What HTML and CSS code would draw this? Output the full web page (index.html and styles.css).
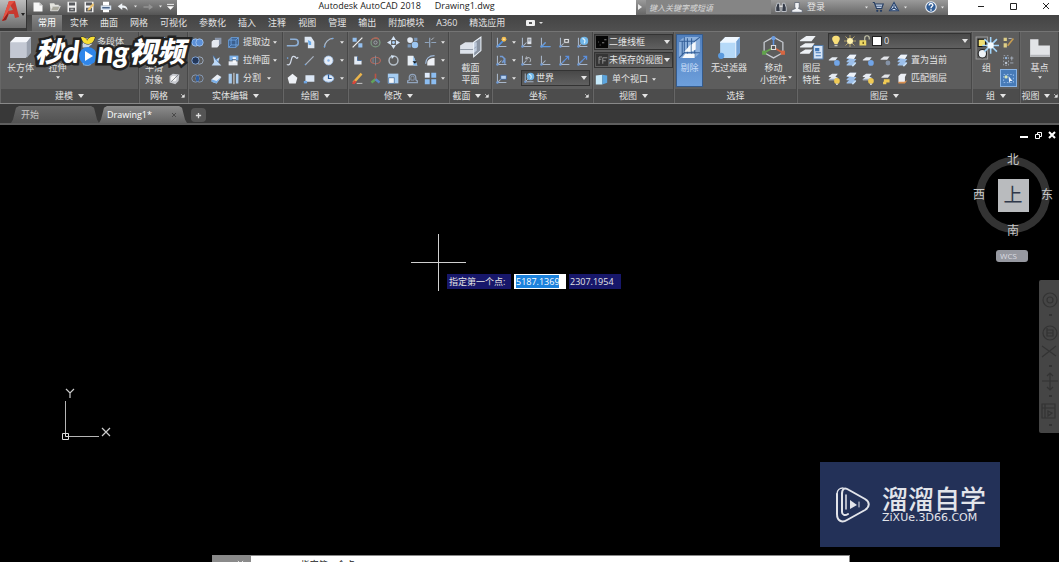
FILE: index.html
```html
<!DOCTYPE html>
<html lang="zh-CN">
<head>
<meta charset="utf-8">
<title>Autodesk AutoCAD 2018 Drawing1.dwg</title>
<link rel="stylesheet" href="styles.css">
</head>
<body>
<svg class="sprite" aria-hidden="true">
  <symbol id="caret" viewBox="0 0 6 4"><path d="M0 0h6L3 4z" fill="currentColor"/></symbol>
  <symbol id="launch" viewBox="0 0 6 6"><path d="M0 0l4 4M5 1v4H1z" stroke="currentColor" fill="currentColor"/></symbol>
  <symbol id="box" viewBox="0 0 24 24"><path d="M2 7l5-5h15v15l-5 5H2z" fill="#c3c8d3"/><path d="M2 7l5-5h15l-4 5z" fill="#f4f6fa"/><path d="M18 7l4-5v15l-4 5z" fill="#9ba2af"/></symbol>
  <symbol id="extrude" viewBox="0 0 24 24"><path d="M3 20l6-5h12l-5 6z" fill="#78b2ed"/><path d="M6 6l4-3h9v12l-4 3H6z" fill="#d7dde8"/></symbol>
  <symbol id="poly" viewBox="0 0 16 16"><path d="M2 10l3-7h8v7l-4 4H2z" fill="#c9d5e4"/></symbol>
  <symbol id="cone" viewBox="0 0 16 16"><path d="M7 3l6 9c-2 3-9 3-11 0z" fill="#dfe8f4"/><path d="M2 12h7l3 2H3z" fill="#68a4e0"/></symbol>
  <symbol id="mesh" viewBox="0 0 16 16"><path d="M2 5l4-3 8 1-1 8-4 4-7-2z" fill="#c7cad0"/><circle cx="7" cy="8" r="3.500" fill="#f5f5f5"/><path d="M4 12l9-9" stroke="#73777e"/></symbol>
  <symbol id="meshred" viewBox="0 0 16 16"><path d="M2 6l5-3 6 2-1 7-5 2-5-3z" fill="#b8bcc5"/><path d="M9 8l5 2-4 4z" fill="#d9543d"/></symbol>
  <symbol id="union" viewBox="0 0 16 16"><circle cx="5.500" cy="8" r="4.500" fill="#5b8fd6" stroke="#a9c9f2"/><circle cx="10.500" cy="8" r="4.500" fill="#5b8fd6" stroke="#a9c9f2"/></symbol>
  <symbol id="subtract" viewBox="0 0 16 16"><circle cx="10.500" cy="8" r="4.500" fill="none" stroke="#a7b7ce"/><circle cx="5.500" cy="8" r="4.500" fill="#24385a" stroke="#8fb5ea"/></symbol>
  <symbol id="intersect" viewBox="0 0 16 16"><circle cx="5.500" cy="8" r="4.500" fill="none" stroke="#8ea5c6"/><circle cx="10.500" cy="8" r="4.500" fill="none" stroke="#8ea5c6"/><ellipse cx="8" cy="8" rx="2" ry="3.600" fill="#2d5ea3"/></symbol>
  <symbol id="interf" viewBox="0 0 16 16"><path d="M6 2h8v7l-2 2H6z" fill="#8a96aa"/><path d="M2 7l2-2h7v7l-2 2H2z" fill="#e4e8ef"/></symbol>
  <symbol id="slice" viewBox="0 0 16 16"><path d="M4 2l3 5 5-3-2 6 4 4H2l3-4z" fill="#bcd7f5"/><path d="M4 2l6 8" stroke="#3f7cc5"/></symbol>
  <symbol id="thick" viewBox="0 0 16 16"><path d="M2 9l7-6 5 3-6 8-6-2z" fill="#e9edf4"/><path d="M2 9l6 2 6-5-6 8-6-2z" fill="#79aee7"/></symbol>
  <symbol id="edges" viewBox="0 0 16 16"><path d="M2 5h9v9H2zM5 2h9v9H5zM2 5l3-3M11 5l3-3M11 14l3-3M2 14l3-3" fill="#3c5f8c" stroke="#6fa8ea"/></symbol>
  <symbol id="face" viewBox="0 0 16 16"><path d="M3 2h11v6H3z" fill="#7cb0e8"/><path d="M2 9h11v5H2z" fill="#e6ebf3"/><path d="M7 4h4v7H7z" fill="#f7f9fc"/><path d="M6 7h5" stroke="#24456f"/></symbol>
  <symbol id="split" viewBox="0 0 16 16"><path d="M2 2h4v12H2zM11 2h3v12h-3z" fill="#a5caee"/><path d="M8.500 1v14" stroke="#fff"/></symbol>
  <symbol id="pline" viewBox="0 0 16 16"><path d="M5 4h6a4 4 0 0 1 0 8H1" fill="none" stroke="#8eb0d7" stroke-width="2"/></symbol>
  <symbol id="polysolid" viewBox="0 0 16 16"><path d="M2 1h8l4 6v8H6V8H2z" fill="#dce6f2"/><path d="M6 5l4 2v4H7z" fill="#66a9eb"/></symbol>
  <symbol id="arc" viewBox="0 0 16 16"><path d="M3 14C3 8 8 3 14 3" fill="none" stroke="#aebdcf" stroke-width="1.500"/><circle cx="3" cy="13" r="1" fill="#6fa8ea"/><circle cx="13" cy="3" r="1" fill="#6fa8ea"/></symbol>
  <symbol id="spline" viewBox="0 0 16 16"><path d="M1 13c7 3 4-12 9-10 3 1 2 4 5 1" fill="none" stroke="#d3dbe8" stroke-width="1.500"/><circle cx="2" cy="5" r="1" fill="#76a7df"/></symbol>
  <symbol id="line" viewBox="0 0 16 16"><path d="M3 13L13 3" stroke="#aab4c2" stroke-width="1.500"/><circle cx="3" cy="13" r="1" fill="#76a7df"/></symbol>
  <symbol id="circle" viewBox="0 0 16 16"><circle cx="8" cy="8" r="5.500" fill="#e6edf7" stroke="#a5c5ed"/><circle cx="8" cy="8" r="1.500" fill="#89b7ee"/></symbol>
  <symbol id="pentagon" viewBox="0 0 16 16"><path d="M8 2l6 5-2 7H4L2 7z" fill="#eef1f6"/></symbol>
  <symbol id="rect" viewBox="0 0 16 16"><path d="M3 4h11v8H3z" fill="#dbe7f6"/><path d="M1 11h4v3H1z" fill="#6ea5e2"/></symbol>
  <symbol id="ellipse" viewBox="0 0 16 16"><ellipse cx="8" cy="8" rx="6.500" ry="4.500" fill="#dce7f5" stroke="#8eb5e5"/><path d="M8 3v5h4" fill="none" stroke="#24599b" stroke-width="1.500"/></symbol>
  <symbol id="mirror3" viewBox="0 0 16 16"><path d="M2 2h5v5H2zM9 9h5v5H9z" fill="#94c0ef"/><path d="M2 14L14 2" stroke="#f1f1f1" stroke-width="1.500"/></symbol>
  <symbol id="gizmo" viewBox="0 0 16 16"><circle cx="8" cy="8" r="5.500" fill="none" stroke="#7b9a80" stroke-width="1.500"/><path d="M3 5a6 6 0 0 1 9-1" fill="none" stroke="#b95b50" stroke-width="1.500"/><circle cx="8" cy="8" r="2" fill="none" stroke="#a7adb7"/></symbol>
  <symbol id="move" viewBox="0 0 16 16"><path d="M8 0l3 5H5zM8 16l3-5H5zM0 8l5-3v6zM16 8l-5-3v6z" fill="#d7e6f8"/><circle cx="8" cy="8" r="1.800" fill="#a8cef7"/></symbol>
  <symbol id="copy" viewBox="0 0 16 16"><circle cx="5" cy="5" r="3.500" fill="#e3eaf4"/><circle cx="11" cy="11" r="4" fill="#9cc6f1"/><path d="M10 2h4v4h-4zM2 10h4v4H2z" fill="#7895b7"/></symbol>
  <symbol id="trim" viewBox="0 0 16 16"><path d="M1 8h5M9 8h6M7 2v12" stroke="#8fa4bd" stroke-width="1.500"/><path d="M9 5l3-3" stroke="#c9d3e0"/></symbol>
  <symbol id="stretch" viewBox="0 0 16 16"><path d="M4 3h4v5h5v5H4z" fill="#e3ebf5"/><path d="M8 3v5h5" fill="none" stroke="#3d689e"/></symbol>
  <symbol id="rotate3" viewBox="0 0 16 16"><ellipse cx="8" cy="8" rx="6" ry="4" fill="none" stroke="#b2675b" stroke-width="1.500"/><path d="M8 2v12M5 5v6" stroke="#8292a4"/></symbol>
  <symbol id="rotate" viewBox="0 0 16 16"><circle cx="8" cy="8" r="5.500" fill="none" stroke="#b6c0ca" stroke-width="1.800"/><path d="M5 1l4 2-3 3z" fill="#d2e3f4"/></symbol>
  <symbol id="mirror" viewBox="0 0 16 16"><path d="M2 2h7l5 12H2z" fill="#e7edf3"/><path d="M9 2l5 12H9z" fill="#80b8ee"/><path d="M8 9h5l-2 3z" fill="#111"/></symbol>
  <symbol id="fillet" viewBox="0 0 16 16"><path d="M4 14v-3c0-4 4-6 9-6v9z" fill="#edf0f5"/><path d="M2 12C2 6 6 2 13 2" fill="none" stroke="#9fb8d8" stroke-width="1.500"/></symbol>
  <symbol id="erase" viewBox="0 0 16 16"><path d="M3 13L13 2" stroke="#ebb54c" stroke-width="3"/><path d="M1 14l3-4 3 2-3 3z" fill="#d9453c"/><path d="M7 14h7" stroke="#ddd"/></symbol>
  <symbol id="scale3" viewBox="0 0 16 16"><path d="M8 2v8" stroke="#ba5446" stroke-width="2"/><path d="M8 9l-5 4" stroke="#63a45a" stroke-width="3"/><path d="M8 9l5 4" stroke="#5a87c9" stroke-width="3"/></symbol>
  <symbol id="scale" viewBox="0 0 16 16"><path d="M1 2h13v12H1z" fill="#a6cdf2"/><path d="M2 7h7v7H2z" fill="#f3f6f9" stroke="#4c77a9"/></symbol>
  <symbol id="offset" viewBox="0 0 16 16"><path d="M2 13v-2c3 0 2-2 2-4a4 4 0 0 1 8 0c0 2 0 4 2 4v2z" fill="none" stroke="#91a4bd" stroke-width="1.500"/><path d="M6 10V7a2 2 0 0 1 4 0v3z" fill="none" stroke="#91a4bd"/></symbol>
  <symbol id="array" viewBox="0 0 16 16"><path d="M1 1h6v6H1z" fill="#dfebfb"/><path d="M9 1h6v6H9zM1 9h6v6H1zM9 9h6v6H9z" fill="#8cbdf1"/></symbol>
  <symbol id="section" viewBox="0 0 24 24"><path d="M2 10l5-3h11v8l-4 3H2z" fill="#dde2ea"/><path d="M2 14h12l4-3" fill="none" stroke="#949da9"/><path d="M15 7l7-5v13l-7 6z" fill="#a9b9d0" fill-opacity=".6" stroke="#edf3fa"/></symbol>
  <symbol id="ucs" viewBox="0 0 16 16"><path d="M3 2v11h11M3 13l5-5" fill="none" stroke="#a8b6c9" stroke-width="1.300"/><circle cx="3" cy="13" r="1.500" fill="#6d99d5"/></symbol>
  <symbol id="ucsnew" viewBox="0 0 16 16"><use href="#ucs"/><path d="M4 12l6-6" stroke="#4c91e5" stroke-width="2"/><circle cx="11" cy="4" r="3" fill="#f4bd50"/><circle cx="11" cy="4" r="1" fill="#fff5c9"/></symbol>
  <symbol id="ucsrot" viewBox="0 0 16 16"><use href="#ucs"/><path d="M6 3h3l3 3-3 5M12 6v6" fill="none" stroke="#739bd3" stroke-width="2"/></symbol>
  <symbol id="ucsdoc" viewBox="0 0 16 16"><use href="#ucs"/><path d="M9 2h5v8H9z" fill="#dde1e8"/><path d="M10 4h3M10 6h3" stroke="#687383"/></symbol>
  <symbol id="ucsblue" viewBox="0 0 16 16"><use href="#ucs"/><path d="M3 13h11M3 13l5-5" fill="none" stroke="#5f9be2" stroke-width="1.500"/></symbol>
  <symbol id="ucsobj" viewBox="0 0 16 16"><use href="#ucs"/><path d="M7 3h7v6H7z" fill="#e1e3e6" stroke="#555"/><path d="M9 5h3v2H9z" fill="#444"/></symbol>
  <symbol id="ucsprev" viewBox="0 0 16 16"><use href="#ucs"/><path d="M7 6c4-4 8 0 5 4M7 6l1-3M7 6h3" fill="none" stroke="#c6ccd5"/></symbol>
  <symbol id="ucsz" viewBox="0 0 16 16"><use href="#ucs"/><path d="M5 11l8-8M9 3h4v4" fill="none" stroke="#5b8fdd" stroke-width="1.500"/></symbol>
  <symbol id="ucsworld" viewBox="0 0 16 16"><use href="#ucs"/><circle cx="10" cy="6" r="5" fill="#71b6e8"/><path d="M8 3c3 1 4 3 2 6" fill="none" stroke="#e1f5fb" stroke-width="1.500"/></symbol>
  <symbol id="ucsview" viewBox="0 0 16 16"><use href="#ucs"/><path d="M7 4h7v5H7z" fill="#b4d0f2" stroke="#375d93"/></symbol>
  <symbol id="wire" viewBox="0 0 16 16"><path d="M0 0h16v16H0z" fill="#050505"/><path d="M3 8h1M8 9h3M11 5h3M5 12h1" stroke="#aaa"/></symbol>
  <symbol id="savedview" viewBox="0 0 16 16"><path d="M0 0h16v16H0z" fill="#353535"/><path d="M4 13V4h4M4 7h3M9 13V5h6M9 9h4" fill="none" stroke="#aaa"/></symbol>
  <symbol id="viewport" viewBox="0 0 16 16"><path d="M1 3l8-1v12H1z" fill="#c6eafb"/><path d="M9 2l6 1v9l-6 2z" fill="#5ba5de"/></symbol>
  <symbol id="cull" viewBox="0 0 24 24"><path d="M2 6l5-4h15v15l-5 5H2z" fill="#8db1dd"/><path d="M2 6h15v16M17 6l5-4M7 2v15L2 22M7 17h15M5 6v14M10 3v17M14 3v17" fill="none" stroke="#345f98"/><path d="M7 16l6-7v7zM14 9l4-3v8l-4 2zM8 18h9v4H5z" fill="#f6f9fc"/></symbol>
  <symbol id="filter" viewBox="0 0 24 24"><path d="M3 7l5-5h14v15l-5 5H3z" fill="#b5d9f8"/><path d="M3 7l5-5h14l-4 5z" fill="#eff7ff"/><path d="M18 7l4-5v15l-4 5z" fill="#77a3d4"/><path d="M3 7h15v15" fill="none" stroke="#e7f3ff"/><circle cx="4" cy="20" r="3" fill="#5a9ade"/></symbol>
  <symbol id="gizmobig" viewBox="0 0 24 24"><path d="M12 2l9 5v10l-9 5-9-5V7z" fill="none" stroke="#c9cdd4" stroke-width="1.200"/><path d="M12 12V2" stroke="#5c91dd" stroke-width="1.500"/><path d="M12 12l-9 5" stroke="#66a650" stroke-width="1.500"/><path d="M12 12l9 5" stroke="#d06442" stroke-width="1.500"/><path d="M10 10h4v4h-4z" fill="#555" stroke="#ddd"/><circle cx="12" cy="3" r="2" fill="#6a9bdf"/><path d="M1 15h4v4H1z" fill="#62a34d"/><path d="M19 15h4v4h-4z" fill="#d76641"/></symbol>
  <symbol id="layers" viewBox="0 0 24 24"><path d="M1 5l6-4h9l-4 5H1zM1 11l5-3h9l-3 4H1zM1 17l5-3h7l-3 4H1z" fill="#eef1f5"/><path d="M14 10h9v13h-9z" fill="#d8e6f8" stroke="#557faf"/><path d="M16 13h3v2h-3zM16 17h5M16 20h5" stroke="#4077b7" fill="#4077b7"/></symbol>
  <symbol id="bulb" viewBox="0 0 16 16"><path d="M5 10C0 3 5 1 8 1s8 2 3 9l-1 2H6z" fill="#f9df79"/><path d="M6 13h4v2H6z" fill="#c4c4bc"/></symbol>
  <symbol id="sun" viewBox="0 0 16 16"><path d="M8 0v16M0 8h16M2 2l12 12M14 2L2 14" stroke="#d4bd70"/><circle cx="8" cy="8" r="4" fill="#fff2ad"/></symbol>
  <symbol id="lock" viewBox="0 0 16 16"><path d="M9 8V4a3 3 0 0 1 6 0v2" fill="none" stroke="#c9c9ae" stroke-width="1.500"/><path d="M2 7h9v7H2z" fill="#ecd765"/><path d="M6 9h2v3H6z" fill="#756522"/></symbol>
  <symbol id="layer" viewBox="0 0 16 16"><path d="M1 5l4-3h7l-3 4H1zM1 9l3-3h8l-3 4H1z" fill="#e5eaf1"/><path d="M1 9h8l3-3" fill="none" stroke="#788aa4"/></symbol>
  <symbol id="layblue" viewBox="0 0 16 16"><path d="M1 7l4-3h7l-3 4H1z" fill="#e5eaf1"/><circle cx="11" cy="11" r="3.500" fill="#71a5e8"/></symbol>
  <symbol id="laystack" viewBox="0 0 16 16"><path d="M2 5l4-4h8l-3 5H2zM2 9l3-3h9l-3 4H2zM2 13l3-3h9l-3 4H2z" fill="#9cbfea"/><path d="M2 5l4-4h8l-3 5z" fill="#edf2f8"/><path d="M9 15l4-4" stroke="#c6def5" stroke-width="2"/></symbol>
  <symbol id="laygold" viewBox="0 0 16 16"><use href="#layer"/><circle cx="11" cy="11" r="3.500" fill="#f0ca54"/><path d="M10 14h2v2h-2z" fill="#ddd"/></symbol>
  <symbol id="layunlock" viewBox="0 0 16 16"><path d="M3 6l4-3h7l-3 4H3z" fill="#e3e5ea"/><path d="M6 9h7v4H9v2H5v-3h1z" fill="#f0ca54"/></symbol>
  <symbol id="laygray" viewBox="0 0 16 16"><path d="M2 6l4-3h7l-3 4H2z" fill="#e3e5ea"/><circle cx="11" cy="11" r="3" fill="#8492a6"/></symbol>
  <symbol id="laymatch" viewBox="0 0 16 16"><path d="M3 5l3-3h7l-2 4v7H3z" fill="#eceff4"/><path d="M3 12h7l4-2-3 4H3z" fill="#d98f4f"/></symbol>
  <symbol id="group" viewBox="0 0 24 24"><path d="M2 2h11v21H2z" fill="none" stroke="#999"/><path d="M4 4h7v7H4z" fill="#f0df72" stroke="#111"/><circle cx="8" cy="18" r="4" fill="#eef3f7" stroke="#222"/><path d="M16 2v16M8 10h16M10 4l12 12M22 4L10 16" stroke="#a3d5fa" stroke-width="1.500"/><circle cx="16" cy="10" r="3" fill="#f3fbff"/></symbol>
  <symbol id="groupedit" viewBox="0 0 16 16"><path d="M2 2h4v4H2zM2 9h4v5H2z" fill="#dfcf87"/><path d="M7 12l7-9" stroke="#c49b51" stroke-width="2"/><path d="M8 3h4" stroke="#ccc"/></symbol>
  <symbol id="ungroup" viewBox="0 0 16 16"><path d="M2 2h6v12H2z" fill="none" stroke="#a6adb8" stroke-dasharray="2"/><circle cx="5" cy="5" r="1.500" fill="#8fb1d8"/><circle cx="5" cy="11" r="1.500" fill="#bbc4d0"/><path d="M12 3v5M10 5h4M10 11h4" stroke="#afbac9"/></symbol>
  <symbol id="groupsel" viewBox="0 0 16 16"><path d="M2 3h12v10H2z" fill="none" stroke="#a4c8f3" stroke-dasharray="2"/><circle cx="5" cy="6" r="2" fill="#d8e6b9"/><path d="M8 5l5 6h-3l-1 3z" fill="#e8f1fc"/></symbol>
  <symbol id="base" viewBox="0 0 24 24"><path d="M3 4h8v6h11v11H3z" fill="#e2e4e7"/><path d="M3 19h19v2H3z" fill="#b4b6ba"/></symbol>
  <symbol id="new" viewBox="0 0 16 16"><path d="M2 2h8l4 4v8H2z" fill="#f8f8f8"/><path d="M10 2v4h4" fill="#b9b9b9"/></symbol>
  <symbol id="open" viewBox="0 0 16 16"><path d="M1 3h6l1 2h5v2H5l-3 6z" fill="#e4e4de"/><path d="M5 7h10l-3 6H2z" fill="#aaa99d" stroke="#eee"/></symbol>
  <symbol id="save" viewBox="0 0 16 16"><path d="M2 1h12v14H2z" fill="#f1f1f1"/><path d="M4 2h8v4H4zM4 9h8v5H4z" fill="#57595d"/><path d="M6 11h4" stroke="#fff"/></symbol>
  <symbol id="saveas" viewBox="0 0 16 16"><use href="#save"/><path d="M7 10l6-7 2 2-6 7-3 1z" fill="#edc36e"/></symbol>
  <symbol id="print" viewBox="0 0 16 16"><path d="M4 1h8v5H4zM4 10h8v5H4z" fill="#fff"/><path d="M1 6h14v6H1z" fill="#d7e2ef"/><path d="M3 9h10" stroke="#4a6588" stroke-width="2"/></symbol>
  <symbol id="undo" viewBox="0 0 16 16"><path d="M1 7l6-4v3c5 0 7 2 7 7-2-4-4-4-7-4v3z" fill="#f0f4f8"/></symbol>
  <symbol id="redo" viewBox="0 0 16 16"><path d="M2 8h10M9 5l4 3-4 3" fill="none" stroke="#949494" stroke-width="2"/></symbol>
  <symbol id="binoc" viewBox="0 0 16 16"><path d="M3 3h3l1 11H1V9zM10 3h3l2 6v5H9z" fill="#353b47" stroke="#d9dde4"/><path d="M6 7h4" stroke="#ddd" stroke-width="2"/></symbol>
  <symbol id="user" viewBox="0 0 16 16"><path d="M5 2h6v6l-1 2 5 2v3H1v-3l5-2-1-2z" fill="#f0f2f5" stroke="#555e6b"/></symbol>
  <symbol id="cart" viewBox="0 0 16 16"><path d="M1 2h2l3 8h7l2-6H4" fill="#c3d2e8" stroke="#243c61" stroke-width="1.500"/><path d="M5 7h8" stroke="#243c61"/><circle cx="7" cy="13" r="1.500" fill="#243c61"/><circle cx="12" cy="13" r="1.500" fill="#243c61"/></symbol>
  <symbol id="apps" viewBox="0 0 16 16"><path d="M8 2L2 13h12z" fill="#d6e3f4" stroke="#28446f" stroke-width="1.500"/><path d="M8 5v4M8 9l-4 3M8 9l4 3" fill="none" stroke="#28446f" stroke-width="1.500"/></symbol>
  <symbol id="help" viewBox="0 0 16 16"><circle cx="8" cy="8" r="7" fill="#315e97" stroke="#f0f3f8" stroke-width="1.500"/><path d="M5.500 6c0-4 5-3 5-0.500C10.500 7 8 7 8 9.500M8 11v2" fill="none" stroke="#fff" stroke-width="1.800"/></symbol>
</svg>

<div class="app">
  <header class="top">
    <button class="appmenu" aria-label="应用程序菜单">
      <svg viewBox="0 0 26 27"><path d="M2 20L9 0h6l4 16-4 1-1-4H9l-3 6z" fill="#c8382e"/><path d="M10 4l-2 6 5-1z" fill="#8f8b89"/><path d="M2 20l5-10 1 4-2 5z" fill="#8e211d"/><path d="M9 0h6l-4 4-4 9-5 7z" fill="#e65244"/><path d="M21 12h4l-2 3z" fill="#222"/></svg>
    </button>
    <div class="toprows">
      <div class="titlebar">
        <div class="quick">
          <button aria-label="新建"><svg class="i"><use href="#new"/></svg></button>
          <button aria-label="打开"><svg class="i"><use href="#open"/></svg></button>
          <button aria-label="保存"><svg class="i"><use href="#save"/></svg></button>
          <button aria-label="另存为"><svg class="i"><use href="#saveas"/></svg></button>
          <button aria-label="打印"><svg class="i"><use href="#print"/></svg></button>
          <button aria-label="放弃"><svg class="i"><use href="#undo"/></svg></button>
          <svg class="c"><use href="#caret"/></svg>
          <button aria-label="重做"><svg class="i"><use href="#redo"/></svg></button>
          <svg class="c"><use href="#caret"/></svg>
          <button class="more" aria-label="自定义"><svg viewBox="0 0 8 8"><path d="M0 1h8" stroke="#fff"/><path d="M0 3h8L4 7z" fill="#fff"/></svg></button>
        </div>
        <h1 class="title"><span>Autodesk AutoCAD 2018</span><span>Drawing1.dwg</span></h1>
        <div class="info">
          <button class="expand" aria-label="展开"><svg viewBox="0 0 4 6"><path d="M0 0l4 3-4 3z" fill="#eee"/></svg></button>
          <input class="search" aria-label="搜索" placeholder="键入关键字或短语">
          <button aria-label="查找"><svg class="i"><use href="#binoc"/></svg></button>
          <button class="login"><svg class="i"><use href="#user"/></svg>登录</button>
          <svg class="c"><use href="#caret"/></svg>
          <button aria-label="商店"><svg class="i"><use href="#cart"/></svg></button>
          <button aria-label="应用"><svg class="i"><use href="#apps"/></svg></button>
          <svg class="c"><use href="#caret"/></svg>
          <button class="help" aria-label="帮助"><svg class="i"><use href="#help"/></svg></button>
          <svg class="c"><use href="#caret"/></svg>
        </div>
        <div class="win">
          <button aria-label="最小化"><svg viewBox="0 0 8 8"><path d="M1 4.500h6" stroke="#222"/></svg></button>
          <button aria-label="最大化"><svg viewBox="0 0 8 8"><path d="M1.500 1.500h6v6h-6z" fill="none" stroke="#222"/></svg></button>
          <button aria-label="关闭"><svg viewBox="0 0 8 8"><path d="M1 1l6 6M7 1L1 7" stroke="#222"/></svg></button>
        </div>
      </div>
      <nav class="tabs">
        <button class="on">常用</button><button>实体</button><button>曲面</button><button>网格</button><button>可视化</button><button>参数化</button><button>插入</button><button>注释</button><button>视图</button><button>管理</button><button>输出</button><button>附加模块</button><button>A360</button><button>精选应用</button>
        <button class="cam" aria-label="录制"><svg viewBox="0 0 18 8"><rect x="1" y="1" width="9" height="6" rx="1" fill="#eee"/><path d="M4 3h3v2H4z" fill="#555"/><path d="M14 3h4l-2 2z" fill="#ddd"/></svg></button>
      </nav>
    </div>
  </header>

  <main class="ribbon">
    <section class="panel">
      <div class="body model">
        <button class="big"><svg class="b"><use href="#box"/></svg><span>长方体</span><svg class="c"><use href="#caret"/></svg></button>
        <button class="big"><svg class="b"><use href="#extrude"/></svg><span>拉伸</span><svg class="c"><use href="#caret"/></svg></button>
        <div class="stack">
          <button class="t"><svg class="i"><use href="#poly"/></svg>多段体</button>
          <button class="t"><svg class="i"><use href="#cone"/></svg>按住</button>
        </div>
      </div>
      <h2>建模<svg class="c"><use href="#caret"/></svg></h2>
    </section>
    <section class="panel">
      <div class="body meshes">
        <button class="big"><svg class="b"><use href="#box"/></svg><span>平滑<br>对象</span></button>
        <div class="stack">
          <button class="t" aria-label="提高平滑度"><svg class="i"><use href="#mesh"/></svg></button>
          <button class="t" aria-label="降低平滑度"><svg class="i"><use href="#meshred"/></svg></button>
          <button class="t" aria-label="优化网格"><svg class="i"><use href="#mesh"/></svg></button>
        </div>
      </div>
      <h2>网格<svg class="l"><use href="#launch"/></svg></h2>
    </section>
    <section class="panel">
      <div class="body grid g-solid">
        <button class="t" aria-label="并集"><svg class="i"><use href="#union"/></svg></button>
        <button class="t" aria-label="干涉"><svg class="i"><use href="#interf"/></svg></button>
        <button class="t lab"><svg class="i"><use href="#edges"/></svg>提取边</button><svg class="c"><use href="#caret"/></svg>
        <button class="t" aria-label="差集"><svg class="i"><use href="#subtract"/></svg></button>
        <button class="t" aria-label="剖切"><svg class="i"><use href="#slice"/></svg></button>
        <button class="t lab"><svg class="i"><use href="#face"/></svg>拉伸面</button><svg class="c"><use href="#caret"/></svg>
        <button class="t" aria-label="交集"><svg class="i"><use href="#intersect"/></svg></button>
        <button class="t" aria-label="加厚"><svg class="i"><use href="#thick"/></svg></button>
        <button class="t lab wide"><svg class="i"><use href="#split"/></svg>分割<svg class="c"><use href="#caret"/></svg></button>
      </div>
      <h2>实体编辑<svg class="c"><use href="#caret"/></svg></h2>
    </section>
    <section class="panel">
      <div class="body grid g-draw">
        <button class="t" aria-label="多段线"><svg class="i"><use href="#pline"/></svg></button><button class="t" aria-label="三维多段线"><svg class="i"><use href="#polysolid"/></svg></button><button class="t" aria-label="圆弧"><svg class="i"><use href="#arc"/></svg></button><svg class="c"><use href="#caret"/></svg>
        <button class="t" aria-label="样条曲线"><svg class="i"><use href="#spline"/></svg></button><button class="t" aria-label="直线"><svg class="i"><use href="#line"/></svg></button><button class="t" aria-label="圆"><svg class="i"><use href="#circle"/></svg></button><svg class="c"><use href="#caret"/></svg>
        <button class="t" aria-label="多边形"><svg class="i"><use href="#pentagon"/></svg></button><button class="t" aria-label="矩形"><svg class="i"><use href="#rect"/></svg></button><button class="t" aria-label="椭圆"><svg class="i"><use href="#ellipse"/></svg></button><svg class="c"><use href="#caret"/></svg>
      </div>
      <h2>绘图<svg class="c"><use href="#caret"/></svg></h2>
    </section>
    <section class="panel">
      <div class="body grid g-modify">
        <button class="t" aria-label="三维镜像"><svg class="i"><use href="#mirror3"/></svg></button><button class="t" aria-label="三维旋转"><svg class="i"><use href="#gizmo"/></svg></button><button class="t" aria-label="移动"><svg class="i"><use href="#move"/></svg></button><button class="t" aria-label="复制"><svg class="i"><use href="#copy"/></svg></button><button class="t" aria-label="修剪"><svg class="i"><use href="#trim"/></svg></button><svg class="c"><use href="#caret"/></svg>
        <button class="t" aria-label="拉伸"><svg class="i"><use href="#stretch"/></svg></button><button class="t" aria-label="三维对齐"><svg class="i"><use href="#rotate3"/></svg></button><button class="t" aria-label="旋转"><svg class="i"><use href="#rotate"/></svg></button><button class="t" aria-label="镜像"><svg class="i"><use href="#mirror"/></svg></button><button class="t" aria-label="圆角"><svg class="i"><use href="#fillet"/></svg></button><svg class="c"><use href="#caret"/></svg>
        <button class="t" aria-label="删除"><svg class="i"><use href="#erase"/></svg></button><button class="t" aria-label="三维缩放"><svg class="i"><use href="#scale3"/></svg></button><button class="t" aria-label="缩放"><svg class="i"><use href="#scale"/></svg></button><button class="t" aria-label="偏移"><svg class="i"><use href="#offset"/></svg></button><button class="t" aria-label="阵列"><svg class="i"><use href="#array"/></svg></button><svg class="c"><use href="#caret"/></svg>
      </div>
      <h2>修改<svg class="c"><use href="#caret"/></svg></h2>
    </section>
    <section class="panel">
      <div class="body center">
        <button class="big"><svg class="b"><use href="#section"/></svg><span>截面<br>平面</span></button>
      </div>
      <h2>截面<svg class="c"><use href="#caret"/></svg><svg class="l"><use href="#launch"/></svg></h2>
    </section>
    <section class="panel">
      <div class="body grid g-coord">
        <button class="t" aria-label="原点"><svg class="i"><use href="#ucsnew"/></svg></button><svg class="c"><use href="#caret"/></svg><button class="t" aria-label="命名 UCS"><svg class="i"><use href="#ucsdoc"/></svg></button><button class="t" aria-label="UCS"><svg class="i"><use href="#ucsblue"/></svg></button><button class="t" aria-label="对象 UCS"><svg class="i"><use href="#ucsobj"/></svg></button><button class="t" aria-label="世界 UCS"><svg class="i"><use href="#ucsworld"/></svg></button>
        <button class="t" aria-label="旋转 X"><svg class="i"><use href="#ucsrot"/></svg></button><svg class="c"><use href="#caret"/></svg><button class="t" aria-label="上一个 UCS"><svg class="i"><use href="#ucsprev"/></svg></button><button class="t" aria-label="原点 UCS"><svg class="i"><use href="#ucs"/></svg></button><button class="t" aria-label="Z 轴"><svg class="i"><use href="#ucsz"/></svg></button><button class="t" aria-label="三点"><svg class="i"><use href="#ucsz"/></svg></button>
        <button class="t" aria-label="视图 UCS"><svg class="i"><use href="#ucsview"/></svg></button><svg class="c"><use href="#caret"/></svg>
        <div class="combo span"><svg class="i"><use href="#ucsworld"/></svg><select aria-label="坐标系"><option>世界</option></select><svg class="c"><use href="#caret"/></svg></div>
      </div>
      <h2>坐标<svg class="l"><use href="#launch"/></svg></h2>
    </section>
    <section class="panel">
      <div class="body views">
        <div class="combo"><svg class="i"><use href="#wire"/></svg><select aria-label="视觉样式"><option>二维线框</option></select><svg class="c"><use href="#caret"/></svg></div>
        <div class="combo"><svg class="i"><use href="#savedview"/></svg><select aria-label="视图"><option>未保存的视图</option></select><svg class="c"><use href="#caret"/></svg></div>
        <button class="t lab"><svg class="i"><use href="#viewport"/></svg>单个视口<svg class="c"><use href="#caret"/></svg></button>
      </div>
      <h2>视图<svg class="c"><use href="#caret"/></svg></h2>
    </section>
    <section class="panel">
      <div class="body select">
        <button class="big on"><svg class="b"><use href="#cull"/></svg><span>剔除</span></button>
        <button class="big"><svg class="b"><use href="#filter"/></svg><span>无过滤器</span><svg class="c"><use href="#caret"/></svg></button>
        <button class="big"><svg class="b"><use href="#gizmobig"/></svg><span>移动<br>小控件</span></button>
        <svg class="c"><use href="#caret"/></svg>
      </div>
      <h2>选择</h2>
    </section>
    <section class="panel">
      <div class="body layer">
        <button class="big"><svg class="b"><use href="#layers"/></svg><span>图层<br>特性</span></button>
        <div class="layertools">
          <div class="combo"><svg class="i"><use href="#bulb"/></svg><svg class="i"><use href="#sun"/></svg><svg class="i"><use href="#lock"/></svg><span class="swatch"></span><select aria-label="图层"><option>0</option></select><svg class="c"><use href="#caret"/></svg></div>
          <div class="row"><button class="t" aria-label="关"><svg class="i"><use href="#layblue"/></svg></button><button class="t" aria-label="隔离"><svg class="i"><use href="#laystack"/></svg></button><button class="t" aria-label="冻结"><svg class="i"><use href="#layblue"/></svg></button><button class="t" aria-label="锁定"><svg class="i"><use href="#laygray"/></svg></button><button class="t lab"><svg class="i"><use href="#laystack"/></svg>置为当前</button></div>
          <div class="row"><button class="t" aria-label="打开所有"><svg class="i"><use href="#laygold"/></svg></button><button class="t" aria-label="取消隔离"><svg class="i"><use href="#laystack"/></svg></button><button class="t" aria-label="解冻"><svg class="i"><use href="#laygold"/></svg></button><button class="t" aria-label="解锁"><svg class="i"><use href="#layunlock"/></svg></button><button class="t lab"><svg class="i"><use href="#laymatch"/></svg>匹配图层</button></div>
        </div>
      </div>
      <h2>图层<svg class="c"><use href="#caret"/></svg></h2>
    </section>
    <section class="panel">
      <div class="body groups">
        <button class="big"><svg class="b"><use href="#group"/></svg><span>组</span></button>
        <div class="stack">
          <button class="t" aria-label="编组编辑"><svg class="i"><use href="#groupedit"/></svg></button>
          <button class="t" aria-label="解除编组"><svg class="i"><use href="#ungroup"/></svg></button>
          <button class="t on" aria-label="组选择"><svg class="i"><use href="#groupsel"/></svg></button>
        </div>
      </div>
      <h2>组<svg class="c"><use href="#caret"/></svg></h2>
    </section>
    <section class="panel">
      <div class="body center">
        <button class="big"><svg class="b"><use href="#base"/></svg><span>基点</span><svg class="c"><use href="#caret"/></svg></button>
      </div>
      <h2>视图<svg class="c"><use href="#caret"/></svg><svg class="l"><use href="#launch"/></svg></h2>
    </section>
    <div class="brand"><span>秒</span><span class="latin">d</span><svg class="play" viewBox="0 0 18 30"><path d="M2 1c4 0 6 2 6 4 1-3 4-5 8-4-1 5-4 7-7 7-4 0-6-3-7-7z" fill="#f7df35" stroke="#222"/><circle cx="9" cy="20" r="9" fill="#2f86ea"/><path d="M6 15l8 5-8 5z" fill="#fff"/></svg><span class="latin">ng</span><span>视频</span></div>
  </main>

  <div class="files">
    <button class="file">开始</button>
    <button class="file on">Drawing1*<svg viewBox="0 0 6 6"><path d="M1 1l4 4M5 1L1 5" stroke="#4a4a4a"/></svg></button>
    <button class="plus" aria-label="新图形"><svg viewBox="0 0 8 8"><path d="M4 1v6M1 4h6" stroke="#ddd" stroke-width="1.500"/></svg></button>
  </div>

  <div class="canvas">
    <div class="docwin">
      <button aria-label="最小化"><svg viewBox="0 0 8 8"><path d="M0 6h8" stroke="#fff" stroke-width="2"/></svg></button>
      <button aria-label="还原"><svg viewBox="0 0 8 8"><path d="M1.500 3.500h4v4h-4zM3.500 3V1.500h4v4H6" fill="none" stroke="#fff"/></svg></button>
      <button aria-label="关闭"><svg viewBox="0 0 8 8"><path d="M1 1l6 6M7 1L1 7" stroke="#fff" stroke-width="2"/></svg></button>
    </div>
    <svg class="cross" viewBox="0 0 55 57"><path d="M27.500 0v57M0 28.500h55" stroke="#d0d0d0"/></svg>
    <div class="dyn">
      <label for="px">指定第一个点:</label>
      <span class="field"><input id="px" value="5187.1369"></span>
      <input class="py" aria-label="Y" value="2307.1954">
    </div>
    <svg class="ucsicon" viewBox="0 0 54 56"><path d="M5.500 14v32M8 49.500h31" stroke="#b5b5b5"/><path d="M2.500 46.500h6v6h-6zM5.500 46v3.500H9" fill="none" stroke="#ddd"/><path d="M6 2l4 4 4-4M10 6v5M42 41l8 8M50 41l-8 8" fill="none" stroke="#ccc" stroke-width="1.200"/></svg>
    <div class="cube">
      <span class="n">北</span><span class="w">西</span><button class="up">上</button><span class="e">东</span><span class="s">南</span>
    </div>
    <button class="wcs">WCS</button>
    <div class="nav">
      <svg viewBox="0 0 20 153" fill="none" stroke="#333" stroke-width="1.200"><circle cx="11" cy="20" r="7"/><circle cx="11" cy="20" r="3"/><circle cx="11" cy="53" r="7"/><path d="M8 48v8h6v-6H8M8 53h6M3 66l14 10M17 66L3 77M11 93v17M3 101h16M8 96l3-3 3 3M8 107l3 3 3-3M3 124h13v14H3zM3 128h13M6 124v14M9 131l4 2-4 3z"/><path d="M10 35h3M10 86h3M10 116h3M10 145h3" stroke-width="2"/></svg>
    </div>
    <div class="mark">
      <svg viewBox="0 0 36 38" fill="none" stroke="#e2e4ea" stroke-linecap="round"><path d="M2 8v20c0 7 5 9 10 6l18-10c5-3 5-8 0-11L14 4C9 1 7 3 7 8v18c0 3 3 4 6 2" stroke-width="2"/><path d="M2 8c0-4 3-6 6-6M11 9v14" stroke-width="1.500"/><path d="M15 14l7 5-7 4z" fill="#e2e4ea" stroke="none"/><path d="M24 16v5"/></svg>
      <div><strong>溜溜自学</strong><span>ZiXUe.3D66.COM</span></div>
    </div>
    <div class="cmd"><span class="grip"><svg viewBox="0 0 8 8"><path d="M1 1l6 6M7 1L1 7" stroke="#eee"/></svg></span><input aria-label="命令行" value="指定第一个点:"></div>
  </div>
</div>
</body>
</html>
```
FILE: styles.css
```css
*, *::before { box-sizing: border-box; }
body { margin: 0; background: #000; color: #e4e4e4; font: 9px/12px "Open Sans", "Noto Sans CJK SC", sans-serif; overflow: hidden; }
button, input, select { margin: 0; padding: 0; border: 0; background: none; color: inherit; font: inherit; appearance: none; }
button { white-space: nowrap; }
svg { display: block; flex: none; }
.sprite { position: absolute; width: 0; height: 0; }
.app { display: flex; flex-direction: column; height: 100vh; }
.i { width: 13px; height: 13px; }
.b { width: 25px; height: 25px; }
.c { width: 4px; height: 3px; }
.l { width: 4px; height: 4px; }

.top { display: flex; height: 31px; background: #4d4d4d; }
.appmenu { width: 27px; background: linear-gradient(#bdbdbd, #6d6d6d); border-right: 1px solid #333; border-bottom: 3px solid #3a3a3a; }
.appmenu svg { width: 26px; height: 27px; }
.toprows { flex: 1; min-width: 0; }
.titlebar { display: flex; height: 15px; background: #fff; }
.quick { display: flex; align-items: center; gap: 5px; width: 150px; padding: 0 0 2px 5px; background: linear-gradient(#888, #555); }
.quick .c { width: 3px; }
.quick .more svg { width: 7px; height: 8px; }
.quick .i, .info .i { width: 12px; height: 12px; }
.title { flex: 1; display: flex; justify-content: center; gap: 14px; margin: 0; color: #222; font-size: 9px; font-weight: 400; line-height: 11px; white-space: nowrap; }
.info { display: flex; align-items: center; width: 312px; gap: 4px; padding: 0 4px 1px 0; background: linear-gradient(#9a9a9a, #666); }
.info .c { width: 3px; }
.expand { width: 6px; padding-left: 2px; }
.expand svg { width: 4px; height: 6px; }
.search { width: 125px; height: 14px; padding-left: 3px; background: #858585; font-style: italic; font-size: 8px; }
.search::placeholder { color: #d8d8d8; opacity: 1; }
.login { display: flex; align-items: center; gap: 4px; flex: 1; }
.help { padding-left: 14px; }
.win { display: flex; align-items: center; width: 111px; padding: 0 0 4px 14px; }
.win button { flex: 1; }
.win svg { width: 8px; height: 8px; margin: 0 auto 0 15px; }
.tabs { display: flex; height: 16px; padding: 0 5px; background: linear-gradient(#444, #505050); }
.tabs button { padding: 0 6px; }
.tabs .on { margin-right: 2px; background: linear-gradient(#858585, #656565); color: #fff; }
.tabs .cam { padding-left: 14px; }
.cam svg { width: 18px; height: 8px; }

.ribbon { position: relative; display: grid; grid-template-columns: 139fr 49fr 95fr 65fr 101fr 43fr 101fr 81fr 123fr 175fr 48fr 39fr; height: 73px; background: #5d5d5d; border-top: 1px solid #747474; border-bottom: 1px solid #888; }
.panel { display: flex; flex-direction: column; min-width: 0; border-right: 1px solid #484848; border-left: 1px solid #666; }
.panel h2 { display: flex; align-items: center; justify-content: center; gap: 5px; height: 14px; margin: 0; background: #4c4c4c; font-size: 9px; font-weight: 400; line-height: 14px; white-space: nowrap; }
.panel h2 .c { width: 6px; height: 4px; }
.panel:nth-child(2) h2 { padding-left: 8px; gap: 13px; }
.panel:nth-child(7) h2 { justify-content: flex-end; gap: 38px; padding-right: 3px; }
.panel:nth-child(6) h2, .panel:nth-child(12) h2 { gap: 4px; }
.body { flex: 1; min-height: 0; padding-top: 1px; display: flex; }
.big { display: flex; flex-direction: column; align-items: center; padding-top: 2px; line-height: 12px; }
.big .b { margin-bottom: 2px; }
.big .c { margin-top: 2px; }
.big.on { height: 53px; margin-top: 1px; background: linear-gradient(#507fbd, #6d9fdc); border: 1px solid #355b8c; padding-top: 0; color: #c9def8; }
.t { display: flex; align-items: center; justify-content: center; height: 18px; gap: 3px; }
.t.on { background: #477bb8; border: 1px solid #8ab3e3; }
.lab { justify-content: flex-start; }
.stack { display: flex; flex-direction: column; }
.grid { display: grid; grid-auto-rows: 18px; align-items: center; align-content: start; }
.grid > .c { justify-self: center; }
.model { padding-left: 6px; gap: 10px; }
.model .big { min-width: 27px; }
.model .stack { align-items: flex-start; }
.meshes { padding-left: 4px; gap: 4px; }
.meshes .big { width: 20px; }
.g-solid { grid-template-columns: 17px 20px 45px 8px; }
.g-solid .lab { padding-left: 1px; }
.g-solid .wide { grid-column: span 2; }
.g-solid .wide .c { margin-left: 3px; }
.g-draw { grid-template-columns: 16px 18px 20px 8px; }
.g-modify { grid-template-columns: 16px 20px 17px 20px 17px 8px; }
.center { justify-content: center; }
.g-coord { grid-template-columns: 17px 7px 19px 19px 18px 18px; }
.combo { display: flex; align-items: center; height: 16px; padding: 0 2px 0 1px; gap: 1px; background: linear-gradient(#484848, #606060); border: 1px solid #333; }
.combo select { flex: 1; min-width: 0; height: 14px; }
.combo option { background: #444; }
.combo .i { width: 12px; height: 12px; }
.combo .c { width: 6px; height: 4px; }
.span { grid-column: span 4; margin: 0 1px 0 4px; }
.views { flex-direction: column; gap: 2px; padding-top: 2px; }
.views .lab { gap: 4px; padding-left: 1px; }
.select { padding-left: 1px; gap: 8px; }
.select .on { width: 27px; }
.select > .big:nth-child(3) { margin-left: 5px; }
.select > .c { width: 4px; margin: 43px 0 0 -7px; }
.layer { padding-left: 1px; gap: 4px; }
.layertools { flex: 1; min-width: 0; }
.layertools .combo { margin-bottom: 2px; gap: 2px; }
.swatch { width: 10px; height: 10px; background: #fff; border: 1px solid #222; }
.row { display: flex; gap: 4px; }
.row .lab { gap: 2px; }
.groups { padding-left: 1px; gap: 1px; }
.groups .t { width: 17px; }

.brand { position: absolute; left: 35px; top: 0; display: flex; align-items: center; height: 38px; color: #fff; font-size: 28px; font-weight: 900; font-style: italic; line-height: 36px; -webkit-text-stroke: 5px #222; paint-order: stroke fill; pointer-events: none; }
.brand .latin { font-family: Lato, sans-serif; font-size: 30px; }
.play { width: 18px; height: 30px; }

.files { display: flex; align-items: flex-end; height: 21px; padding-left: 11px; background: #383838; border-bottom: 2px solid #5e5e5e; }
.file { display: flex; align-items: center; justify-content: space-between; width: 88px; height: 17px; padding: 0 10px; background: linear-gradient(#666, #525252); clip-path: polygon(0 100%, 2px 80%, 5px 10%, 8px 0, 80px 0, 83px 10%, 86px 80%, 88px 100%); color: #c8c8c8; }
.file.on { padding-left: 8px; background: linear-gradient(#8c8c8c, #616161); color: #fff; }
.file svg { width: 6px; height: 6px; }
.plus { width: 15px; height: 14px; margin: 0 0 1px 4px; padding: 0 4px; background: #555; border-radius: 4px; }
.plus svg { width: 7px; height: 7px; }

.canvas { position: relative; flex: 1; min-height: 0; overflow: hidden; background: #000; }
.docwin { position: absolute; top: 6px; right: 3px; display: flex; gap: 6px; }
.docwin svg { width: 8px; height: 8px; }
.cross { position: absolute; left: 411px; top: 109px; width: 55px; height: 57px; }
.dyn { position: absolute; left: 447px; top: 149px; display: flex; gap: 3px; height: 15px; line-height: 15px; }
.dyn label { width: 64px; padding-left: 2px; background: #17176a; }
.field { display: block; width: 52px; padding: 1px 2px; background: #fff; }
.field input { display: block; width: 43px; height: 13px; background: #1c82dc; color: #fff; }
.dyn .py { width: 52px; padding-left: 1px; background: #17176a; }
.ucsicon { position: absolute; left: 60px; top: 262px; width: 54px; height: 56px; }
.cube { position: absolute; top: 27px; right: 5px; display: grid; grid-template: 16px 54px 18px / 14px 54px 14px; place-items: center; color: #c8c8c8; font-size: 12px; line-height: 14px; }
.cube::before { content: ""; position: absolute; left: 4px; top: 5px; width: 74px; height: 76px; border: 8px solid #333; border-radius: 50%; }
.cube span, .cube button { position: relative; }
.n, .s { grid-column: 2; }
.w { grid-column: 1; }
.cube .up { width: 31px; height: 33px; background: #b9bbbe; color: #30384a; font-size: 19px; }
.wcs { position: absolute; top: 125px; right: 31px; width: 32px; height: 12px; padding: 0 9px 0 2px; border-radius: 3px; background: #9698a0; color: #dcdce2; font-size: 8px; line-height: 12px; }
.nav { position: absolute; top: 155px; right: 0; width: 20px; height: 153px; background: #454545; border-radius: 2px 0 0 2px; }
.nav svg { width: 20px; height: 153px; }
.mark { position: absolute; right: 59px; bottom: 15px; display: flex; align-items: center; gap: 11px; width: 180px; height: 85px; padding-left: 15px; background: #233158; color: #e2e4ea; }
.mark svg { width: 36px; height: 38px; }
.mark strong, .mark span { display: block; white-space: nowrap; }
.mark strong { font-size: 26px; font-weight: 500; line-height: 26px; }
.mark span { font-family: "DejaVu Sans", sans-serif; font-size: 11px; line-height: 12px; }
.cmd { position: absolute; left: 20%; right: 209px; bottom: -13px; display: flex; height: 20px; background: #fff; border: 1px solid #888; }
.grip { width: 38px; padding: 4px 0 0 24px; background: #8a8a8a; }
.grip svg { width: 7px; height: 7px; }
.cmd input { flex: 1; padding-left: 50px; color: #222; }
```
